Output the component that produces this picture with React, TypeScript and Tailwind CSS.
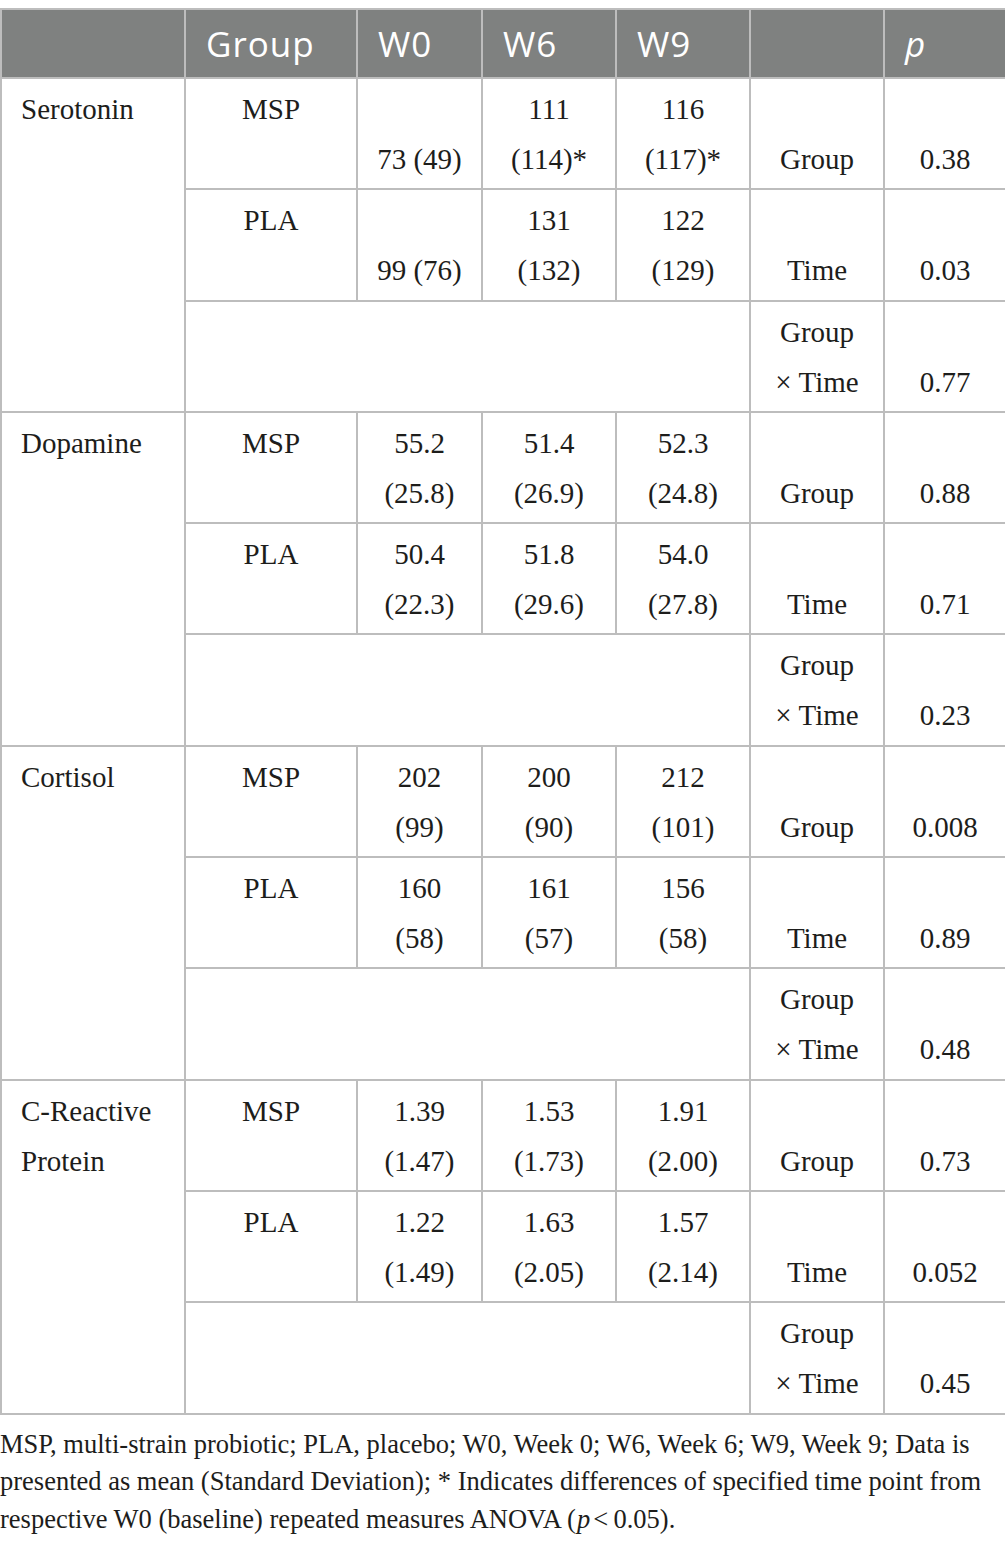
import React from 'react'

type Row = { group: string; w0: string[]; w6: string[]; w9: string[]; term: string[]; p: string }

interface Measure {
  name: string[]
  rows: [Row, Row]
  inter: string
}

const data: Measure[] = [
  {
    name: ['Serotonin'],
    rows: [
      { group: 'MSP', w0: ['', '73 (49)'], w6: ['111', '(114)*'], w9: ['116', '(117)*'], term: ['', 'Group'], p: '0.38' },
      { group: 'PLA', w0: ['', '99 (76)'], w6: ['131', '(132)'], w9: ['122', '(129)'], term: ['', 'Time'], p: '0.03' },
    ],
    inter: '0.77',
  },
  {
    name: ['Dopamine'],
    rows: [
      { group: 'MSP', w0: ['55.2', '(25.8)'], w6: ['51.4', '(26.9)'], w9: ['52.3', '(24.8)'], term: ['', 'Group'], p: '0.88' },
      { group: 'PLA', w0: ['50.4', '(22.3)'], w6: ['51.8', '(29.6)'], w9: ['54.0', '(27.8)'], term: ['', 'Time'], p: '0.71' },
    ],
    inter: '0.23',
  },
  {
    name: ['Cortisol'],
    rows: [
      { group: 'MSP', w0: ['202', '(99)'], w6: ['200', '(90)'], w9: ['212', '(101)'], term: ['', 'Group'], p: '0.008' },
      { group: 'PLA', w0: ['160', '(58)'], w6: ['161', '(57)'], w9: ['156', '(58)'], term: ['', 'Time'], p: '0.89' },
    ],
    inter: '0.48',
  },
  {
    name: ['C-Reactive', 'Protein'],
    rows: [
      { group: 'MSP', w0: ['1.39', '(1.47)'], w6: ['1.53', '(1.73)'], w9: ['1.91', '(2.00)'], term: ['', 'Group'], p: '0.73' },
      { group: 'PLA', w0: ['1.22', '(1.49)'], w6: ['1.63', '(2.05)'], w9: ['1.57', '(2.14)'], term: ['', 'Time'], p: '0.052' },
    ],
    inter: '0.45',
  },
]

const cell = 'border-2 border-[#bdbdbd] align-top pt-[5px] text-center'
const head = 'border-2 border-[#bdbdbd] pl-[20px] font-normal'

function Lines({ lines }: { lines: string[] }) {
  return (
    <>
      {lines.map((l, i) => (
        <div key={i} className="h-[50px] whitespace-nowrap">{l}</div>
      ))}
    </>
  )
}

export default function App() {
  return (
    <div className="w-[1005px] bg-white pt-[8px] text-[#1d1d1b]" style={{ fontFamily: '"Liberation Serif", serif' }}>
      <table className="w-[1005px] table-fixed border-collapse text-[29px] leading-[50px]">
        <colgroup>
          <col className="w-[184px]" />
          <col className="w-[172px]" />
          <col className="w-[125px]" />
          <col className="w-[134px]" />
          <col className="w-[134px]" />
          <col className="w-[134px]" />
          <col className="w-[122px]" />
        </colgroup>
        <thead>
          <tr className="h-[69px] bg-[#7f8180] text-left text-[35px] tracking-[1px] text-white" style={{ fontFamily: '"Open Sans", sans-serif' }}>
            <th className={head}></th>
            <th className={head}>Group</th>
            <th className={head}>W0</th>
            <th className={head}>W6</th>
            <th className={head}>W9</th>
            <th className={head}></th>
            <th className={`${head} italic`}>p</th>
          </tr>
        </thead>
        <tbody>
          {data.map(m => (
            <React.Fragment key={m.name.join(' ')}>
              {m.rows.map((r, i) => (
                <tr key={r.group} className="h-[111.3px]">
                  {i === 0 && (
                    <td rowSpan={3} className="border-2 border-[#bdbdbd] pl-[19px] pt-[5px] text-left align-top">
                      <Lines lines={m.name} />
                    </td>
                  )}
                  <td className={cell}><Lines lines={[r.group, '']} /></td>
                  <td className={cell}><Lines lines={r.w0} /></td>
                  <td className={cell}><Lines lines={r.w6} /></td>
                  <td className={cell}><Lines lines={r.w9} /></td>
                  <td className={cell}><Lines lines={r.term} /></td>
                  <td className={cell}><Lines lines={['', r.p]} /></td>
                </tr>
              ))}
              <tr className="h-[111.3px]">
                <td colSpan={4} className="border-2 border-[#bdbdbd]"></td>
                <td className={cell}><Lines lines={['Group', '× Time']} /></td>
                <td className={cell}><Lines lines={['', m.inter]} /></td>
              </tr>
            </React.Fragment>
          ))}
        </tbody>
      </table>
      <p className="mt-[11px] text-[26.5px] leading-[37.5px]">
        MSP, multi-strain probiotic; PLA, placebo; W0, Week 0; W6, Week 6; W9, Week 9; Data is presented as mean (Standard Deviation); * Indicates differences of specified time point from respective W0 (baseline) repeated measures ANOVA (<span className="inline-block pl-[1px] pr-[3px] italic">p</span>&lt;&thinsp;0.05).
      </p>
    </div>
  )
}
